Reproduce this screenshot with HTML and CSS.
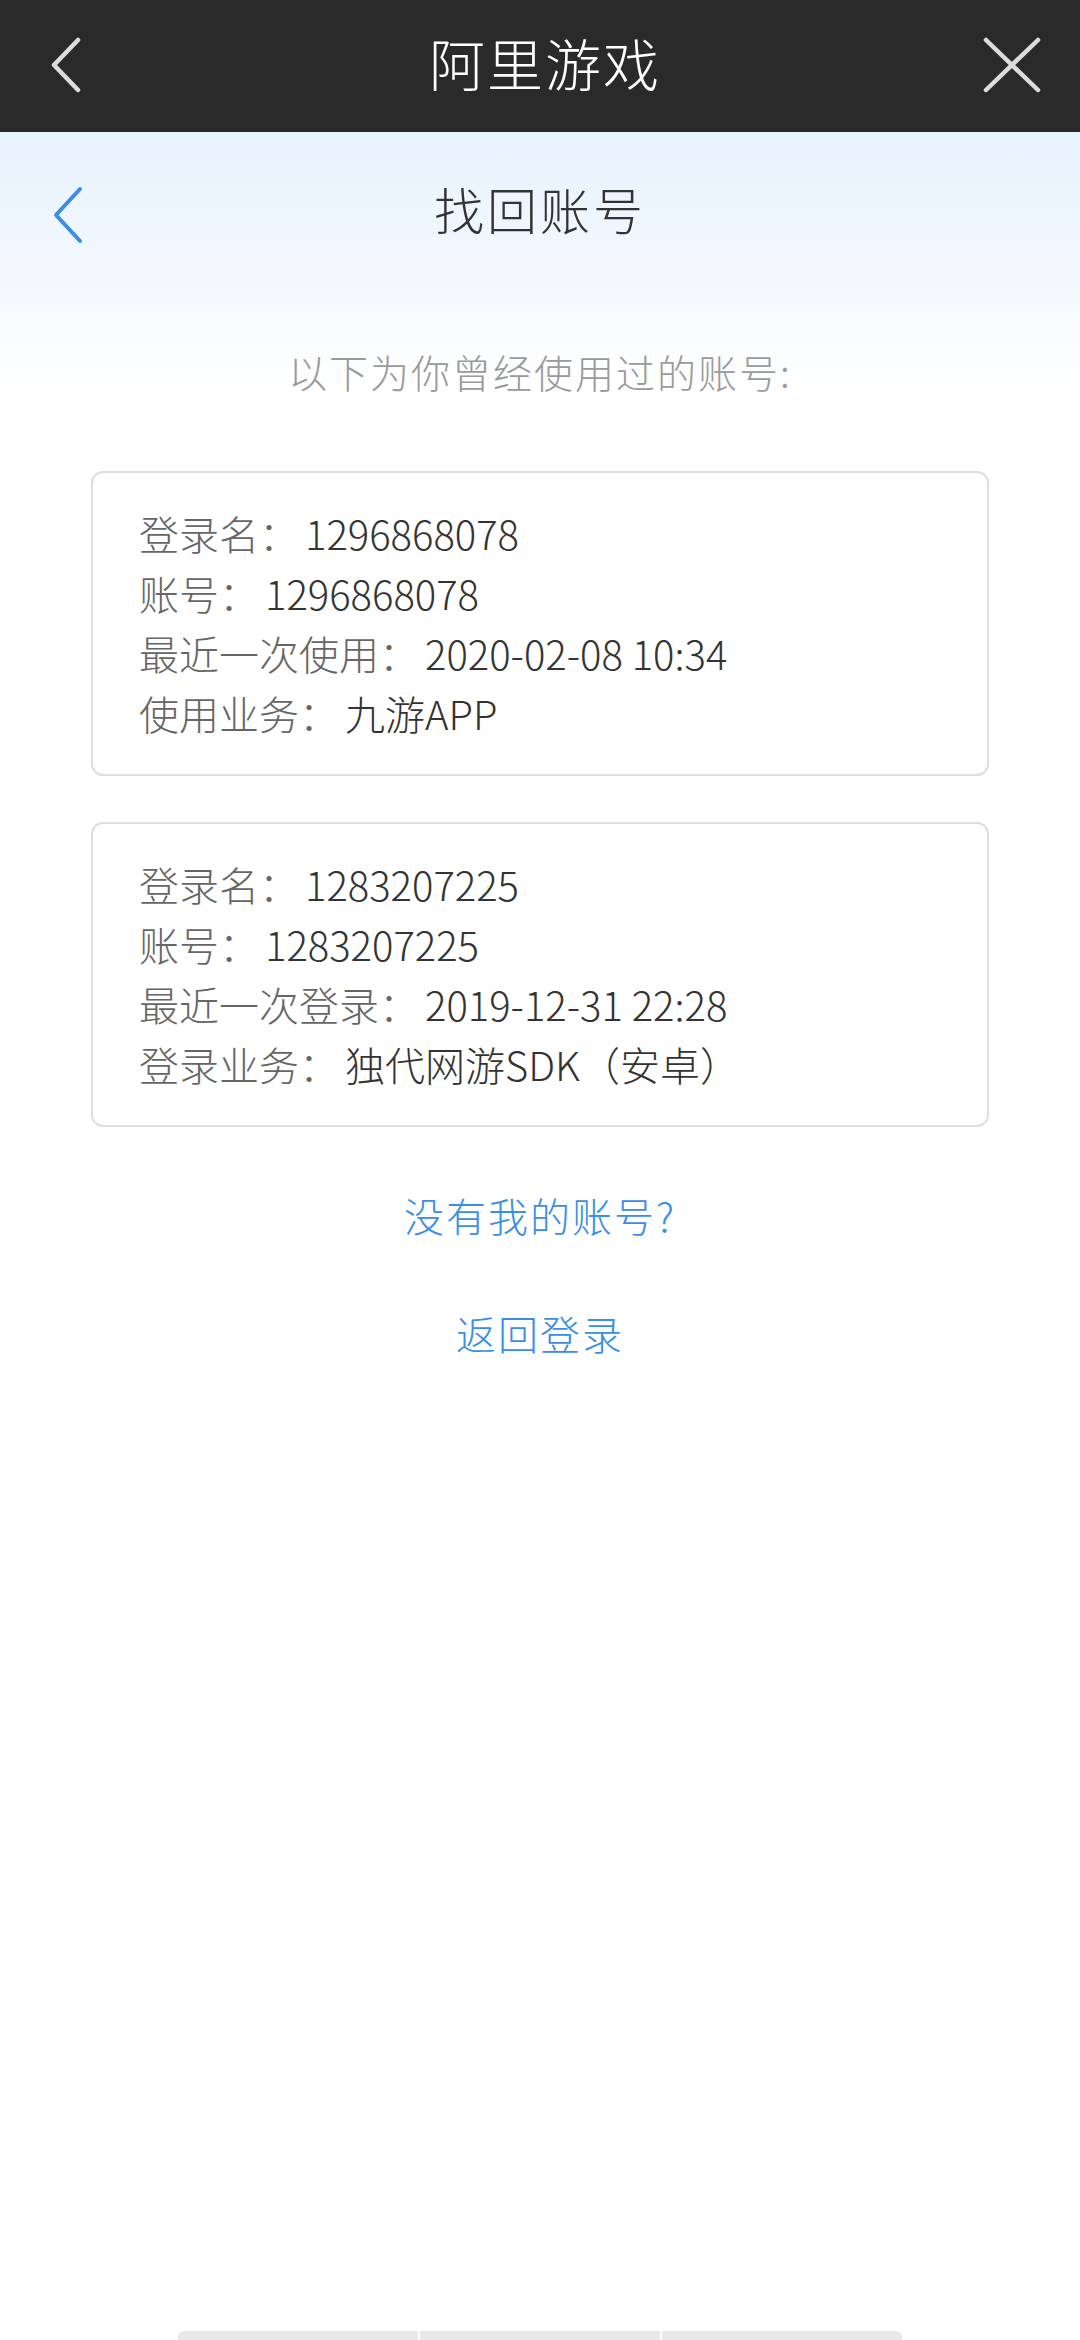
FILE: index.html
```html
<!DOCTYPE html>
<html lang="zh-CN">
<head>
  <meta charset="UTF-8" />
  <meta name="viewport" content="width=device-width, initial-scale=1.0" />
  <title>阿里游戏 - 找回账号</title>
  <link rel="stylesheet" href="styles.css">
</head>
<body>
  <header class="topbar">
    <a class="topbar-back" href="#">
      <svg width="34" height="56" viewBox="0 0 34 56"><polyline points="30,3 6,28 30,53" fill="none" stroke="#dcdcdc" stroke-width="4.5" stroke-linecap="round" stroke-linejoin="round"/></svg>
    </a>
    <h1 class="topbar-title">阿里游戏</h1>
    <a class="topbar-close" href="#">
      <svg width="60" height="56" viewBox="0 0 60 56"><path d="M4 3 L56 53 M56 3 L4 53" fill="none" stroke="#dcdcdc" stroke-width="4.5" stroke-linecap="round"/></svg>
    </a>
  </header>

  <main class="page">
    <div class="subheader">
      <a class="sub-back" href="#">
        <svg width="34" height="58" viewBox="0 0 34 58"><polyline points="30,3 6,29 30,55" fill="none" stroke="#3a8ee6" stroke-width="4" stroke-linecap="round" stroke-linejoin="round"/></svg>
      </a>
      <h2 class="sub-title">找回账号</h2>
    </div>

    <p class="intro">以下为你曾经使用过的账号:</p>

    <div class="account-list">
      <div class="account-card">
        <p><span class="label">登录名：</span><span class="value">1296868078</span></p>
        <p><span class="label">账号：</span><span class="value">1296868078</span></p>
        <p><span class="label">最近一次使用：</span><span class="value">2020-02-08 10:34</span></p>
        <p><span class="label">使用业务：</span><span class="value">九游APP</span></p>
      </div>
      <div class="account-card">
        <p><span class="label">登录名：</span><span class="value">1283207225</span></p>
        <p><span class="label">账号：</span><span class="value">1283207225</span></p>
        <p><span class="label">最近一次登录：</span><span class="value">2019-12-31 22:28</span></p>
        <p><span class="label">登录业务：</span><span class="value">独代网游SDK（安卓）</span></p>
      </div>
    </div>

    <div class="links">
      <a href="#">没有我的账号?</a>
      <a href="#">返回登录</a>
    </div>
  </main>

  <div class="bottom-tabs">
    <span></span><span></span><span></span>
  </div>
</body>
</html>
```

FILE: styles.css
```css
body { margin: 0; padding: 0; font-family: "Noto Sans CJK SC", "Noto Sans", sans-serif; font-weight: 300; background: #fff; height: 2340px; position: relative; overflow: hidden; }
a { text-decoration: none; }
p, h1, h2 { margin: 0; }

.topbar { height: 132px; background: #2a2a2a; display: flex; align-items: center; justify-content: space-between; padding: 0 38px 0 48px; }
.topbar-back, .topbar-close { display: flex; align-items: center; width: 60px; height: 60px; margin-top: -2px; }
.topbar-title { color: #fff; font-size: 56px; font-weight: 300; letter-spacing: 2px; line-height: 1; margin-top: -8px; }

.page { background: linear-gradient(#e7f2fd 0, #f3f8fe 140px, #fff 260px); }
.subheader { height: 156px; display: flex; align-items: center; justify-content: center; position: relative; }
.sub-back { position: absolute; left: 50px; top: 54px; }
.sub-title { font-size: 50px; font-weight: 300; color: #333; letter-spacing: 3px; margin-top: -4px; }

.intro { margin-top: 53px; text-align: center; font-size: 39px; line-height: 60px; color: #9a9a9a; letter-spacing: 2px; }

.account-list { margin: 70px 91px 0; display: flex; flex-direction: column; gap: 46px; }
.account-card { border: 2px solid #dedede; border-radius: 12px; padding: 30px 46px 31px; font-size: 40px; line-height: 60px; }
.account-card .label { color: #666; }
.account-card .value { color: #333; margin-left: 6px; }

.links { display: flex; flex-direction: column; align-items: center; gap: 58px; margin-top: 58px; }
.links a { color: #3a8ee6; font-size: 40px; line-height: 60px; letter-spacing: 2px; }

.bottom-tabs { position: absolute; left: 178px; bottom: 0; width: 724px; height: 9px; display: flex; gap: 2px; }
.bottom-tabs span { flex: 1; background: #e8e8e8; }
.bottom-tabs span:first-child { border-top-left-radius: 6px; }
.bottom-tabs span:last-child { border-top-right-radius: 6px; }
```
